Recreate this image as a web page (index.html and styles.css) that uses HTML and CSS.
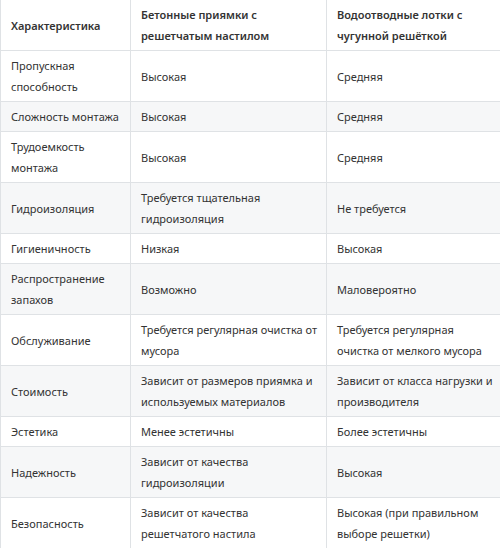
FILE: index.html
```html
<!DOCTYPE html>
<html lang="ru">
<head>
<meta charset="utf-8">
<link rel="stylesheet" href="styles.css">
</head>
<body>
<table class="cmp">
  <colgroup>
    <col class="c1">
    <col class="c2">
    <col class="c3">
  </colgroup>
  <thead>
    <tr><th>Характеристика</th><th>Бетонные приямки с решетчатым настилом</th><th>Водоотводные лотки с чугунной решёткой</th></tr>
  </thead>
  <tbody>
    <tr><td>Пропускная способность</td><td>Высокая</td><td>Средняя</td></tr>
    <tr><td>Сложность монтажа</td><td>Высокая</td><td>Средняя</td></tr>
    <tr><td>Трудоемкость монтажа</td><td>Высокая</td><td>Средняя</td></tr>
    <tr><td>Гидроизоляция</td><td>Требуется тщательная гидроизоляция</td><td>Не требуется</td></tr>
    <tr><td>Гигиеничность</td><td>Низкая</td><td>Высокая</td></tr>
    <tr><td>Распространение запахов</td><td>Возможно</td><td>Маловероятно</td></tr>
    <tr><td>Обслуживание</td><td>Требуется регулярная очистка от мусора</td><td>Требуется регулярная очистка от мелкого мусора</td></tr>
    <tr><td>Стоимость</td><td>Зависит от размеров приямка и используемых материалов</td><td>Зависит от класса нагрузки и производителя</td></tr>
    <tr><td>Эстетика</td><td>Менее эстетичны</td><td>Более эстетичны</td></tr>
    <tr><td>Надежность</td><td>Зависит от качества гидроизоляции</td><td>Высокая</td></tr>
    <tr><td>Безопасность</td><td>Зависит от качества решетчатого настила</td><td>Высокая (при правильном выборе решетки)</td></tr>
  </tbody>
</table>
</body>
</html>
```
FILE: styles.css
```css
html, body {
  margin: 0;
  padding: 0;
  background: #ffffff;
}
.cmp {
  width: 500px;
  border-collapse: collapse;
  table-layout: fixed;
  font-family: "Noto Sans", "Open Sans", sans-serif;
  font-size: 11px;
  line-height: 21px;
  color: #333333;
}
.c1 { width: 130px; }
.c2 { width: 196px; }
.c3 { width: 174px; }
.cmp th,
.cmp td {
  border: 1px solid #dfe2e5;
  padding: 4px 5px 4px 10px;
  text-align: left;
  vertical-align: middle;
}
.cmp th:nth-child(2),
.cmp td:nth-child(2) {
  padding-right: 8px;
}
.cmp th {
  font-weight: 600;
  background: #ffffff;
  border-top: none;
}
.cmp tbody tr:nth-child(even) td {
  background: #f6f7f8;
}
```
